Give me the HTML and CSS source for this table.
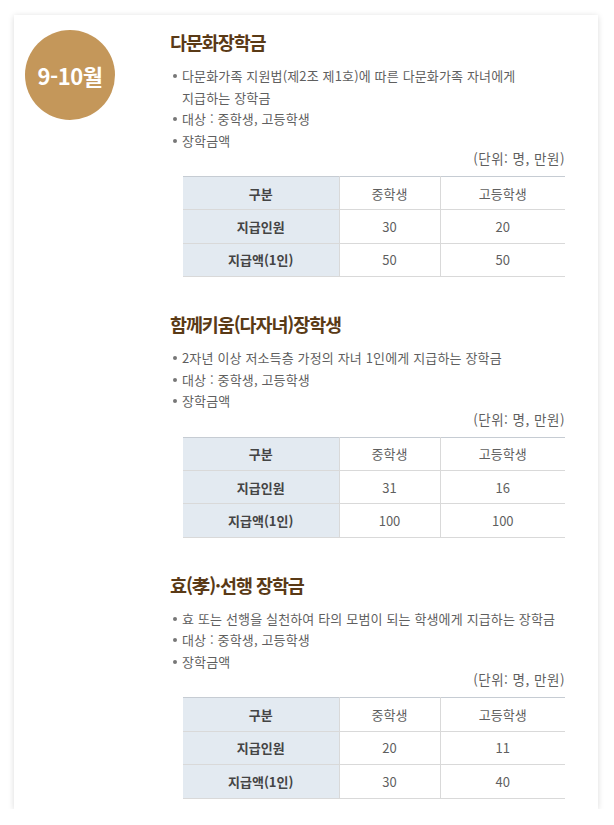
FILE: index.html
```html
<!DOCTYPE html>
<html lang="ko">
<head>
<meta charset="utf-8">
<link rel="stylesheet" href="styles.css">
</head>
<body>
<div class="card">
  <div class="side">
    <div class="badge">9-10월</div>
  </div>
  <div class="content">
    <section class="sec">
      <h2 class="title">다문화장학금</h2>
      <ul class="list">
        <li>다문화가족 지원법(제2조 제1호)에 따른 다문화가족 자녀에게<br>지급하는 장학금</li>
        <li>대상 : 중학생, 고등학생</li>
        <li>장학금액</li>
      </ul>
      <p class="unit">(단위: 명, 만원)</p>
      <table class="tbl">
        <tr><th>구분</th><td>중학생</td><td>고등학생</td></tr>
        <tr><th>지급인원</th><td>30</td><td>20</td></tr>
        <tr><th>지급액(1인)</th><td>50</td><td>50</td></tr>
      </table>
    </section>
    <section class="sec">
      <h2 class="title">함께키움(다자녀)장학생</h2>
      <ul class="list">
        <li>2자년 이상 저소득층 가정의 자녀 1인에게 지급하는 장학금</li>
        <li>대상 : 중학생, 고등학생</li>
        <li>장학금액</li>
      </ul>
      <p class="unit">(단위: 명, 만원)</p>
      <table class="tbl">
        <tr><th>구분</th><td>중학생</td><td>고등학생</td></tr>
        <tr><th>지급인원</th><td>31</td><td>16</td></tr>
        <tr><th>지급액(1인)</th><td>100</td><td>100</td></tr>
      </table>
    </section>
    <section class="sec">
      <h2 class="title">효(孝)·선행 장학금</h2>
      <ul class="list">
        <li>효 또는 선행을 실천하여 타의 모범이 되는 학생에게 지급하는 장학금</li>
        <li>대상 : 중학생, 고등학생</li>
        <li>장학금액</li>
      </ul>
      <p class="unit">(단위: 명, 만원)</p>
      <table class="tbl">
        <tr><th>구분</th><td>중학생</td><td>고등학생</td></tr>
        <tr><th>지급인원</th><td>20</td><td>11</td></tr>
        <tr><th>지급액(1인)</th><td>30</td><td>40</td></tr>
      </table>
    </section>
  </div>
</div>
</body>
</html>
```

FILE: styles.css
```css
* { box-sizing: border-box; }
html, body {
  margin: 0;
  padding: 0;
  background: #ffffff;
}
body {
  font-family: "Noto Sans CJK KR", "Noto Sans", sans-serif;
  color: #555;
}
.card {
  margin: 15px 0 0 14px;
  width: 584px;
  background: #fff;
  box-shadow: 0 1px 6px rgba(0, 0, 0, 0.15);
  display: grid;
  grid-template-columns: 145px 1fr;
  padding: 14px 33px 10px 11px;
}
.badge {
  margin-top: 1px;
  width: 90px;
  height: 90px;
  border-radius: 50%;
  background: #c4975a;
  color: #fff;
  font-weight: 700;
  font-size: 22px;
  letter-spacing: -0.5px;
  display: flex;
  align-items: center;
  justify-content: center;
}
.sec + .sec { margin-top: 34px; }
.title {
  margin: 0;
  font-size: 18.5px;
  line-height: 26px;
  font-weight: 700;
  color: #5a3a16;
  letter-spacing: -1.1px;
}
.list {
  list-style: none;
  margin: 10px 0 0;
  padding: 0 0 0 12px;
  font-size: 13px;
  line-height: 21.5px;
  letter-spacing: 0.15px;
  color: #5f5f5f;
}
.list li { position: relative; }
.list li::before {
  content: "";
  position: absolute;
  left: -9px;
  top: 9px;
  width: 4px;
  height: 4px;
  border-radius: 50%;
  background: #777;
}
.unit {
  margin: -3px 0 0;
  text-align: right;
  font-size: 13.5px;
  line-height: 21px;
  letter-spacing: 0.5px;
  color: #5f5f5f;
}
.tbl {
  margin: 7px 0 0 13px;
  width: 382px;
  border-collapse: collapse;
  font-size: 13px;
  text-align: center;
  border-top: 1px solid #c6ccd3;
}
.tbl th, .tbl td {
  height: 33.4px;
  padding: 0;
  border-bottom: 1px solid #d9d9d9;
}
.tbl th {
  width: 156px;
  background: #e3eaf1;
  color: #444;
  font-weight: 700;
  border-right: 1px solid #d9d9d9;
}
.tbl td { color: #5f5f5f; }
.tbl td:nth-child(2) {
  width: 101px;
  border-right: 1px solid #d9d9d9;
}
```
